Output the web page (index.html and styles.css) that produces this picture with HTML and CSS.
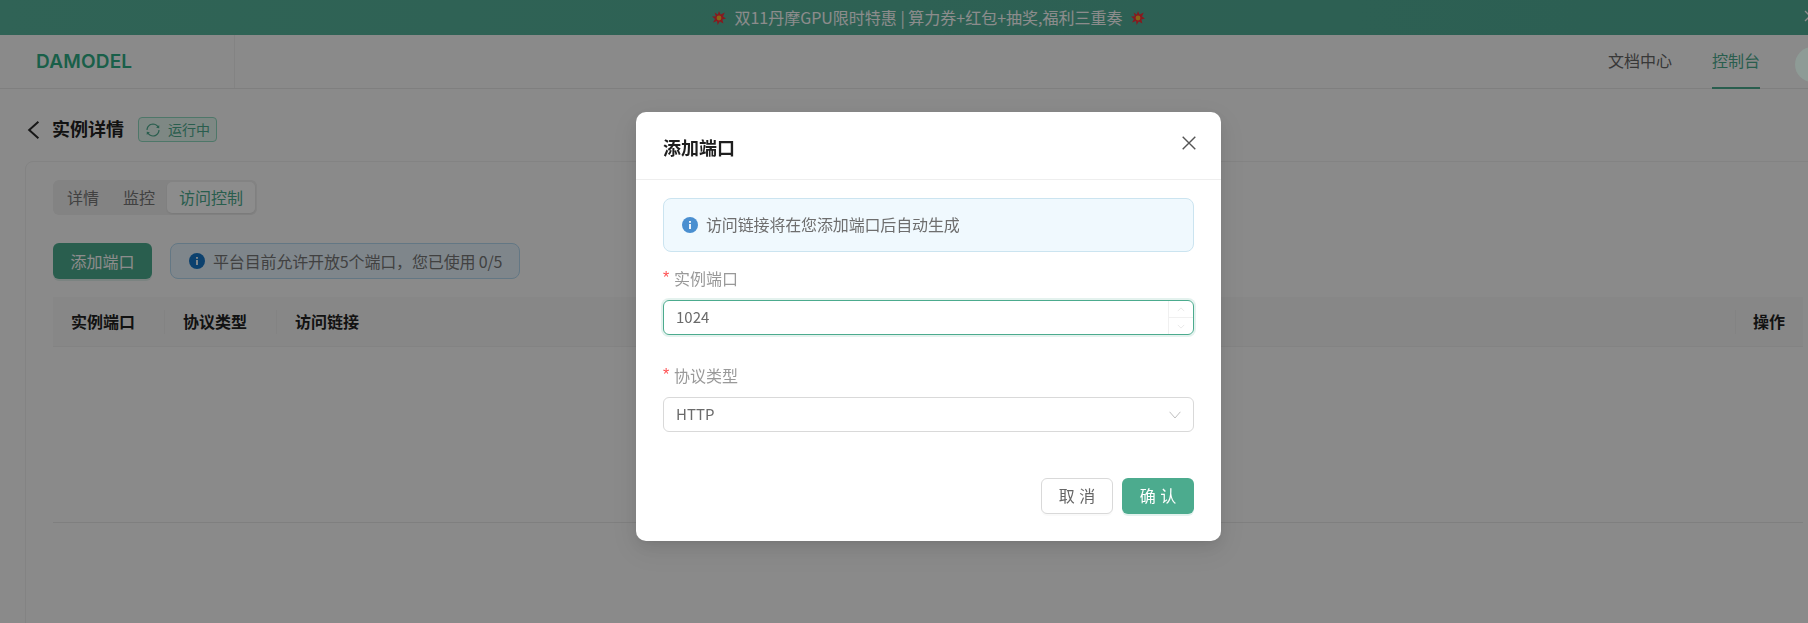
FILE: index.html
```html
<!DOCTYPE html>
<html lang="zh-CN">
<head>
<meta charset="utf-8">
<title>实例详情</title>
<link rel="stylesheet" href="styles.css">
</head>
<body>
<div class="page">
  <div class="banner">
    <svg class="star" viewBox="0 0 14 14"><polygon points="7,0 8.6,3.6 12.8,1.4 11,5.4 14,7.4 10.4,8.4 11.4,12.6 7.8,10.4 5.6,14 5,10 1,11.4 3,8 0,5.6 3.8,5.2 2.6,1.6 5.8,3.4" fill="#f5303a"/><circle cx="7" cy="7" r="2.4" fill="#f2b52a"/></svg>
    <span class="banner-text">双11丹摩GPU限时特惠 | 算力券+红包+抽奖,福利三重奏</span>
    <svg class="star" viewBox="0 0 14 14"><polygon points="7,0 8.6,3.6 12.8,1.4 11,5.4 14,7.4 10.4,8.4 11.4,12.6 7.8,10.4 5.6,14 5,10 1,11.4 3,8 0,5.6 3.8,5.2 2.6,1.6 5.8,3.4" fill="#f5303a"/><circle cx="7" cy="7" r="2.4" fill="#f2b52a"/></svg>
    <svg class="banner-close" viewBox="0 0 12 12"><path d="M1 1l10 10M11 1L1 11" stroke="#fff" stroke-width="1.3" fill="none"/></svg>
  </div>
  <header class="topbar">
    <div class="logo-cell"><span class="logo">DAMODEL</span></div>
    <nav class="nav">
      <a class="nav-item">文档中心</a>
      <a class="nav-item nav-active">控制台</a>
    </nav>
    <div class="avatar"></div>
  </header>
  <main class="main">
    <div class="crumb">
      <svg class="back" viewBox="0 0 13 18"><path d="M11.4.8L2.2 9l9.2 8.2" fill="none" stroke="#2a2a2a" stroke-width="2"/></svg>
      <h1 class="title">实例详情</h1>
      <span class="tag">
        <svg class="sync" viewBox="64 64 896 896"><path fill="currentColor" d="M168 504.2c1-43.7 10-86.1 26.9-126 17.3-41 42.1-77.7 73.7-109.4S337 212.3 378 195c42.4-17.9 87.4-27 133.9-27s91.5 9.1 133.8 27A341.5 341.5 0 01755 268.8c9.9 9.9 19.2 20.4 27.8 31.4l-60.2 47a8 8 0 003 14.1l175.7 43c5 1.2 9.9-2.6 9.9-7.7l.8-180.9c0-6.7-7.7-10.5-12.9-6.3l-56.4 44.1C765.8 155.1 646.2 92 511.8 92 282.7 92 96.3 275.6 92 503.8a8 8 0 008 8.2h60c4.4 0 7.9-3.5 8-7.8zm756 7.8h-60c-4.4 0-7.9 3.5-8 7.8-1 43.7-10 86.1-26.9 126-17.3 41-42.1 77.8-73.7 109.4A342.45 342.45 0 01512.1 856a342.24 342.24 0 01-243.2-100.8c-9.9-9.9-19.2-20.4-27.8-31.4l60.2-47a8 8 0 00-3-14.1l-175.7-43c-5-1.2-9.9 2.6-9.9 7.7l-.7 181c0 6.7 7.7 10.5 12.9 6.3l56.4-44.1C258.2 868.9 377.8 932 512.2 932c229.2 0 415.5-183.7 419.8-411.8a8 8 0 00-8-8.2z"/></svg>
        <span class="tag-text">运行中</span>
      </span>
    </div>
    <section class="card">
      <div class="segmented">
        <span class="seg">详情</span>
        <span class="seg">监控</span>
        <span class="seg seg-active">访问控制</span>
      </div>
      <div class="toolbar">
        <button class="add-btn">添加端口</button>
        <div class="notice">
          <svg class="info" viewBox="0 0 16 16"><circle cx="8" cy="8" r="8" fill="#1677c8"/><rect x="7.1" y="7" width="1.8" height="5" fill="#fff"/><rect x="7.1" y="4" width="1.8" height="1.8" fill="#fff"/></svg>
          <span class="notice-text">平台目前允许开放5个端口，您已使用 0/5</span>
        </div>
      </div>
      <div class="table">
        <div class="thead">
          <div class="th th-fixed">实例端口</div>
          <div class="th th-fixed">协议类型</div>
          <div class="th th-grow">访问链接</div>
          <div class="th th-action">操作</div>
        </div>
        <div class="tbody"></div>
      </div>
    </section>
  </main>
</div>

<div class="mask"></div>
<div class="modal" role="dialog">
  <div class="modal-head">
    <h2 class="modal-title">添加端口</h2>
    <svg class="modal-close" viewBox="0 0 14 14"><path d="M.7.7l12.6 12.6M13.3.7L.7 13.3" stroke="#555" stroke-width="1.4" fill="none"/></svg>
  </div>
  <div class="modal-body">
    <div class="modal-alert">
      <svg class="info" viewBox="0 0 16 16"><circle cx="8" cy="8" r="8" fill="#4a8fd0"/><rect x="7.1" y="7" width="1.8" height="5" fill="#fff"/><rect x="7.1" y="4" width="1.8" height="1.8" fill="#fff"/></svg>
      <span class="alert-text">访问链接将在您添加端口后自动生成</span>
    </div>
    <div class="field field-first">
      <label class="label"><span class="req">*</span>实例端口</label>
      <div class="input input-focus">
        <span class="value">1024</span>
        <div class="spin">
          <span class="spin-btn"><svg viewBox="0 0 10 6"><path d="M1 5l4-4 4 4" fill="none" stroke="#e4e4e4"/></svg></span>
          <span class="spin-btn spin-down"><svg viewBox="0 0 10 6"><path d="M1 1l4 4 4-4" fill="none" stroke="#e4e4e4"/></svg></span>
        </div>
      </div>
    </div>
    <div class="field field-second">
      <label class="label"><span class="req">*</span>协议类型</label>
      <div class="input">
        <span class="value">HTTP</span>
        <svg class="chev" viewBox="0 0 12 8"><path d="M.6.8L6 7l5.4-6.2" fill="none" stroke="#bfbfbf" stroke-width="1"/></svg>
      </div>
    </div>
    <div class="actions">
      <button class="btn btn-ghost"><span class="btn-text">取消</span></button>
      <button class="btn btn-primary"><span class="btn-text">确认</span></button>
    </div>
  </div>
</div>
</body>
</html>
```
FILE: styles.css
```css
* { box-sizing: border-box; }
html, body { margin: 0; padding: 0; height: 100%; overflow: hidden; background: #fcfcfc; }
body { font-family: "Noto Sans CJK SC", "Noto Sans", sans-serif; font-size: 16px; color: #333; }
h1, h2 { margin: 0; }
button { font-family: inherit; cursor: pointer; }

.page { height: 623px; overflow: hidden; }

.banner { height: 35px; display: flex; align-items: center; justify-content: center; gap: 8px; background: linear-gradient(90deg, #58b59d, #50ad96); color: #fff; padding-left: 49px; position: relative; line-height: 35px; }
.star { width: 14px; height: 14px; flex: none; }
.banner-text { white-space: nowrap; }
.banner-close { position: absolute; right: -8px; top: 10px; width: 12px; height: 12px; }

.topbar { height: 54px; display: flex; align-items: stretch; border-bottom: 1px solid #e8e8e8; position: relative; }
.logo-cell { width: 235px; border-right: 1px solid #eee; padding-left: 35px; display: flex; align-items: center; }
.logo { font-family: Inter, sans-serif; font-weight: 600; font-size: 19px; letter-spacing: .2px; color: #2fae85; line-height: 1; margin: -1px 0 0 1px; }
.nav { margin-left: auto; display: flex; gap: 40px; margin-right: 48px; }
.nav-item { line-height: 50px; color: #666; display: block; height: 54px; }
.nav-active { color: #4cab8e; border-bottom: 2px solid #4cab8e; }
.avatar { position: absolute; left: 1795px; top: 12px; width: 35px; height: 35px; border-radius: 50%; background: #8e9b96; z-index: 1001; }

.main { padding: 28px 0 0 25px; }
.crumb { display: flex; align-items: center; height: 25px; }
.back { width: 13px; height: 18px; margin: 0 12px 0 2px; flex: none; }
.title { font-size: 18px; font-weight: 700; color: #222; line-height: 25px; padding-bottom: 2px; height: 27px; }
.tag { margin-left: 14px; width: 79px; height: 25px; border: 1px solid #8fd9c0; border-radius: 4px; background: #e6f7f0; color: #4cab8e; font-size: 14px; display: flex; align-items: center; padding-left: 7px; gap: 8px; }
.tag-text { padding-bottom: 1px; }
.sync { width: 14px; height: 14px; flex: none; }

.card { margin: 19px -40px 0 0; border: 1px solid #eee; border-radius: 8px; padding: 18px 44px 0 27px; height: 600px; }

.segmented { display: inline-flex; background: #eee; border-radius: 6px; padding: 2px; height: 35px; }
.seg { padding: 0 12px; line-height: 30px; color: #777; border-radius: 5px; }
.seg-active { background: #fff; color: #4cab8e; box-shadow: 0 1px 2px rgba(0,0,0,.07); }

.toolbar { display: flex; gap: 18px; margin-top: 28px; }
.add-btn { width: 99px; height: 36px; border: 0; border-radius: 6px; background: #4cab8e; color: #fff; font-size: 16px; box-shadow: 0 2px 0 rgba(76,171,142,.15); padding: 0; }
.notice { width: 350px; height: 36px; background: #e8f5fe; border: 1px solid #b4d9f0; border-radius: 8px; display: flex; align-items: center; padding-left: 18px; gap: 8px; color: #777; }
.notice-text { letter-spacing: -.15px; padding-bottom: 1px; }
.info { width: 16px; height: 16px; flex: none; }

.table { margin-top: 18px; }
.thead { display: flex; height: 50px; align-items: center; background: #f6f6f6; border-bottom: 1px solid #eee; font-weight: 700; color: #222; }
.th { padding: 0 0 2px 18px; line-height: 24px; position: relative; }
.th-fixed { width: 112px; }
.th-grow { flex: 1; }
.th-action { width: 68px; }
.th-fixed::after, .th-action::before { content: ""; position: absolute; top: 1px; width: 1px; height: 24px; background: #eee; }
.th-fixed::after { right: 0; }
.th-action::before { left: 0; }
.tbody { height: 176px; border-bottom: 1px solid #e8e8e8; }

.mask { position: fixed; inset: 0; background: rgba(0,0,0,.45); z-index: 1000; }
.modal { position: fixed; left: 636px; top: 112px; width: 585px; height: 429px; background: #fff; border-radius: 10px; z-index: 1001; box-shadow: 0 6px 16px rgba(0,0,0,.08), 0 3px 6px -4px rgba(0,0,0,.12), 0 9px 28px 8px rgba(0,0,0,.05); }
.modal-head { height: 68px; border-bottom: 1px solid #eee; display: flex; align-items: center; justify-content: space-between; padding: 0 25px 0 27px; }
.modal-title { font-size: 18px; font-weight: 700; color: #1f1f1f; line-height: 26px; margin-top: 2px; }
.modal-close { width: 14px; height: 14px; margin-bottom: 5px; }
.modal-body { padding: 18px 27px 0; }
.modal-alert { height: 54px; background: #f0f9fe; border: 1px solid #cbe4f0; border-radius: 8px; display: flex; align-items: center; padding-left: 18px; gap: 8px; color: #6e6e6e; }
.alert-text { padding-bottom: 2px; letter-spacing: -.15px; }

.field-first { margin-top: 16px; }
.field-second { margin-top: 30px; }
.label { display: flex; height: 22px; align-items: center; color: #999; line-height: 20px; padding-bottom: 2px; margin-bottom: 10px; }
.req { color: #ff4d4f; width: 11px; font-size: 16px; font-family: "Liberation Sans", sans-serif; }
.input { height: 35px; border: 1px solid #d9d9d9; border-radius: 6px; display: flex; align-items: center; justify-content: space-between; padding-left: 12px; color: #6a6a6a; position: relative; }
.input-focus { border-color: #4cab8e; box-shadow: 0 0 0 2px rgba(76,171,142,.15); }
.value { line-height: 24px; font-size: 15px; padding-bottom: 2px; }
.spin { position: absolute; top: 0; right: 0; bottom: 0; width: 25px; border-left: 1px solid #f0f0f0; display: flex; flex-direction: column; }
.spin-btn { flex: 1; display: flex; align-items: center; justify-content: center; }
.spin-btn svg { width: 8px; height: 5px; }
.spin-down { border-top: 1px solid #f0f0f0; }
.chev { width: 12px; height: 8px; margin-right: 12px; }

.actions { display: flex; justify-content: flex-end; gap: 9px; margin-top: 46px; }
.btn { width: 72px; height: 36px; border-radius: 6px; font-size: 16px; letter-spacing: .28em; padding: 0 0 2px .28em; }
.btn-text { display: block; line-height: 24px; }
.btn-ghost { background: #fff; border: 1px solid #d9d9d9; color: #666; box-shadow: 0 2px 0 rgba(0,0,0,.02); }
.btn-primary { background: #4cab8e; border: 0; color: #fff; box-shadow: 0 2px 0 rgba(76,171,142,.15); }
```
